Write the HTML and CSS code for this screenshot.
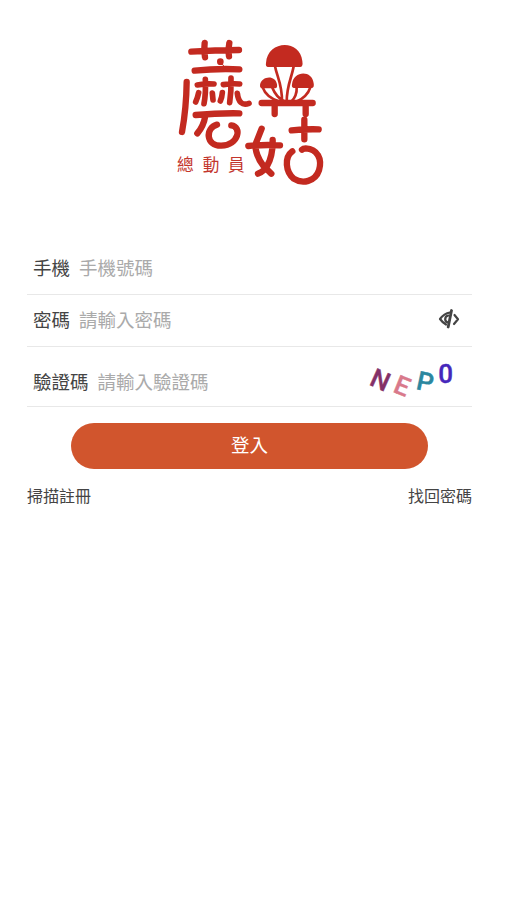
FILE: index.html
```html
<!DOCTYPE html>
<html lang="zh-Hant">
<head>
<meta charset="utf-8">
<meta name="viewport" content="width=device-width, initial-scale=1">
<title>登入</title>
<link rel="stylesheet" href="styles.css">
</head>
<body>
<main class="page">
  <header class="brand">
    <svg class="logo" viewBox="0 0 480 495" aria-label="蘑菇總動員">
      <g class="strokes">
        <path d="M64 65Q135 60 207 60M104 39Q101 58 105 82M178 39Q173 60 177 79"/>
        <path d="M74 122Q140 115 208 118"/>
        <path d="M50 156Q49 235 36 306"/>
        <path class="fine" d="M82 165Q108 160 132 162M160 164Q185 160 209 162M106 148Q108 190 102 221M183 144Q184 185 179 218"/>
        <path class="fine" d="M86 188Q83 203 77 216M127 189L129 210M157 188Q156 202 151 213M202 190C205 215 216 228 237 220"/>
        <path d="M77 255Q145 249 208 250M106 257Q101 288 82 310"/>
        <path d="M141 284C105 294 107 348 154 347C207 345 216 290 184 286"/>
        <path d="M275 219H428M314 222V252M407 222V252"/>
        <path d="M403 269V328M365 301Q403 297 446 298"/>
        <path d="M275 296L256 344Q257 378 280 407L304 431M308 330Q309 378 291 408Q285 422 264 431M235 348Q280 343 330 346"/>
        <path d="M367 364C342 383 347 425 371 446C397 463 436 455 447 421C457 387 443 357 407 355Q400 355 396 359"/>
      </g>
      <g class="fills">
        <circle cx="151" cy="95" r="10"/>
        <path d="M293 111Q286 110 288 99C292 30 390 26 397 93Q400 111 390 111Z"/>
        <path d="M274 175Q269 173 270 165C274 138 316 133 321 163Q323 175 315 175Z"/>
        <path d="M371 174Q364 173 366 163C370 121 427 120 431 160Q434 174 424 174Z"/>
      </g>
      <g class="stems">
        <path class="hair" d="M152 96L169 118"/>
        <path d="M315 109C321 141 337 162 336 216M371 109C365 144 350 166 350 216M278 172C286 195 306 208 330 215M307 173C314 190 323 204 342 213M380 172C381 188 375 204 363 216M421 172C414 194 396 208 377 216"/>
      </g>
      <text class="tagline" x="21 98 174" y="422">總動員</text>
    </svg>
  </header>
  <form class="form">
    <label class="row"><span class="label">手機</span><input class="input" type="text" placeholder="手機號碼"></label>
    <div class="row">
      <span class="label">密碼</span><input class="input" type="password" placeholder="請輸入密碼">
      <svg class="eye" viewBox="0 0 22 20">
        <path d="M12 3.5Q6 4.5 2 10Q4.5 13.5 8 15.5M16.5 6L20 10.3L16 15"/>
        <path d="M13.5 1.5L10.2 18" class="slash"/>
        <path d="M10.5 6.5Q7 7 7.2 10.5Q7.5 13 10 13.5"/>
      </svg>
    </div>
    <div class="row row-code">
      <span class="label">驗證碼</span><input class="input" type="text" placeholder="請輸入驗證碼">
      <div class="captcha"><span class="c1">N</span><span class="c2">E</span><span class="c3">P</span><span class="c4">0</span></div>
    </div>
    <button class="submit" type="button">登入</button>
    <nav class="links"><a>掃描註冊</a><a>找回密碼</a></nav>
  </form>
</main>
</body>
</html>
```
FILE: styles.css
```css
* { box-sizing: border-box; }
body {
  margin: 0;
  background: #fff;
  color: #444;
  font-family: "Noto Sans CJK TC", sans-serif;
}
.page { min-height: 910px; padding-top: 30px; }
.brand { height: 213px; padding-left: 170px; }
.logo { display: block; width: 160px; height: 165px; }
.strokes, .stems {
  fill: none;
  stroke: #c32a20;
  stroke-linecap: round;
  stroke-linejoin: round;
}
.strokes { stroke-width: 19px; }
.strokes .fine { stroke-width: 17px; }
.stems { stroke-width: 8px; }
.stems .hair { stroke-width: 3px; }
.fills { fill: #c32a20; }
.tagline { fill: #c3352c; font-size: 50px; }
.form { width: 445px; margin-left: 27px; }
.row {
  display: flex;
  align-items: center;
  height: 52px;
  padding: 0 12px 4px 6px;
  border-bottom: 1px solid #e8e8e8;
  font-size: 18.5px;
  line-height: 28px;
}
.row-code { height: 60px; padding: 8px 12px 0 6px; }
.label { margin-right: 9px; }
.input {
  flex: 1;
  min-width: 0;
  height: 28px;
  padding: 0;
  border: 0;
  outline: 0;
  background: none;
  font: inherit;
}
.input::placeholder { color: #aaa; opacity: 1; }
.eye {
  width: 22px;
  height: 20px;
  fill: none;
  stroke: #444;
  stroke-width: 2.2px;
  stroke-linecap: round;
  stroke-linejoin: round;
}
.eye .slash { stroke-width: 2.8px; }
.captcha {
  display: flex;
  width: 92px;
  font: 500 26px/28px Roboto, sans-serif;
  -webkit-text-stroke: 0.4px currentColor;
}
.captcha span { width: 22.5px; text-align: center; }
.c1 { color: #843067; transform: translate(1px, -1px) rotate(24deg); }
.c2 { color: #d9798b; transform: translate(0, 5px) rotate(22deg); }
.c3 { color: #2b879f; transform: translate(1px, 1px) rotate(12deg); }
.c4 { color: #4527bb; transform: translate(-1px, -7px); }
.submit {
  display: block;
  width: 357px;
  height: 46px;
  margin: 16px 0 0 44px;
  padding: 0 0 4px;
  border: 0;
  border-radius: 23px;
  background: #d1552d;
  color: #fff;
  font: 18.5px/28px "Noto Sans CJK TC", sans-serif;
}
.links {
  display: flex;
  justify-content: space-between;
  margin-top: 14px;
  font-size: 16px;
  line-height: 24px;
}
```
